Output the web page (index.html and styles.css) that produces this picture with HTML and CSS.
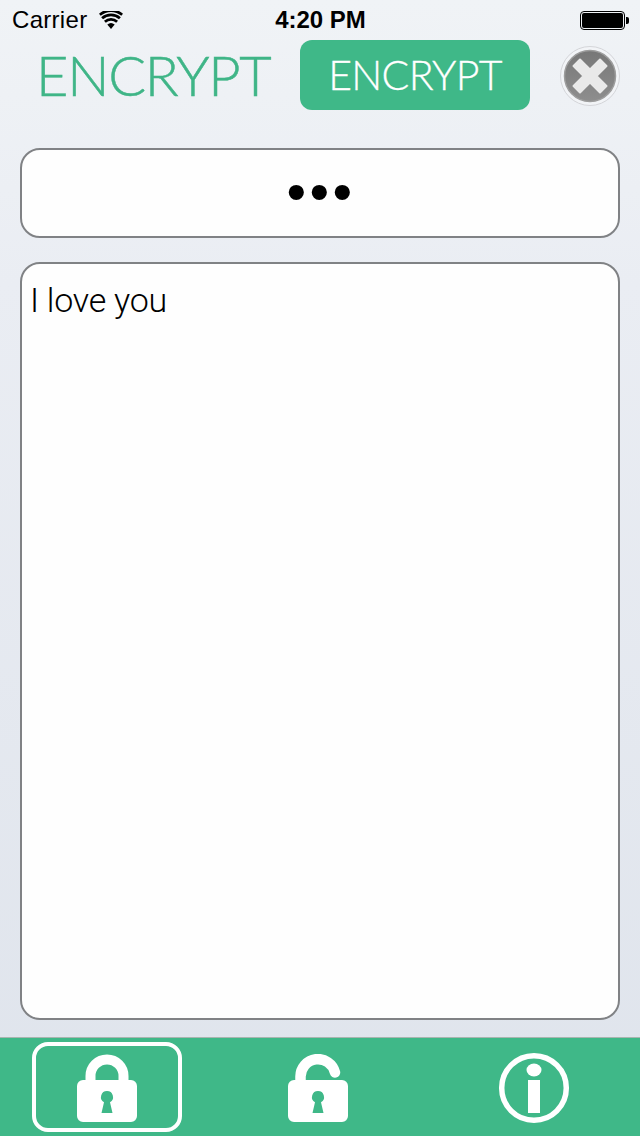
FILE: index.html
```html
<!DOCTYPE html>
<html lang="en">
<head>
<meta charset="utf-8">
<title>Encrypt</title>
<link rel="stylesheet" href="styles.css">
</head>
<body>
<div class="screen">
  <div class="status">
    <div class="status-left">
      <span class="carrier">Carrier</span>
      <svg class="wifi" width="24" height="18" viewBox="0 0 24 18"><path d="M12 18 8.300 13.500a5.800 5.800 0 0 1 7.400 0Z" fill="#000"/><path d="M5.900 10.700a9.300 9.300 0 0 1 12.200 0M3.100 7.200a13.500 13.500 0 0 1 17.800 0M.8 3.800a17.200 17.200 0 0 1 22.400 0" fill="none" stroke="#000" stroke-width="2.800"/></svg>
    </div>
    <div class="time">4:20 PM</div>
    <div class="status-right">
      <div class="battery"><div class="battery-fill"></div></div>
      <div class="battery-nub"></div>
    </div>
  </div>
  <div class="header">
    <div class="title">ENCRYPT</div>
    <div class="action">ENCRYPT</div>
    <svg class="close" width="60" height="60" viewBox="0 0 60 60">
      <defs><linearGradient id="closeg" x1="0" y1="0" x2="0" y2="1"><stop offset="0" stop-color="#777"/><stop offset="1" stop-color="#8e8e8e"/></linearGradient></defs>
      <circle cx="30" cy="30" r="29.500" fill="#f2f4f7" stroke="#d4d5d9" stroke-width="1"/>
      <circle cx="30" cy="30" r="25.500" fill="url(#closeg)" stroke="#9d9d9d" stroke-width="1.500"/>
      <path d="M13.500 20 20 13.500 30 23.500 40 13.500 46.500 20 36.500 30 46.500 40 40 46.500 30 36.500 20 46.500 13.500 40 23.500 30Z" fill="#e9e9e9" stroke="#e9e9e9" stroke-width="2" stroke-linejoin="round"/>
    </svg>
  </div>
  <div class="field password">•••</div>
  <div class="field message">I love you</div>
  <div class="tabs">
    <div class="tab tab-active">
      <svg class="icon" width="60" height="68" viewBox="0 0 60 68"><path d="M13.500 30V22a16.500 16.500 0 0 1 33 0v8" fill="none" stroke="#fff" stroke-width="10"/><path fill-rule="evenodd" d="M6 26h48a6 6 0 0 1 6 6v30a6 6 0 0 1-6 6H6a6 6 0 0 1-6-6V32a6 6 0 0 1 6-6Zm24 11a6 6 0 0 0-3 11.200L24.500 59h11L33 48.200A6 6 0 0 0 30 37Z" fill="#fff"/></svg>
    </div>
    <div class="tab">
      <svg class="icon unlock" width="60" height="68" viewBox="0 0 60 68"><path d="M12.500 30V23A17.500 17.500 0 0 1 47 18.500" fill="none" stroke="#fff" stroke-width="10.500" stroke-linecap="round"/><path fill-rule="evenodd" d="M6 26h48a6 6 0 0 1 6 6v30a6 6 0 0 1-6 6H6a6 6 0 0 1-6-6V32a6 6 0 0 1 6-6Zm24 11a6 6 0 0 0-3 11.200L24.500 59h11L33 48.200A6 6 0 0 0 30 37Z" fill="#fff"/></svg>
    </div>
    <div class="tab">
      <svg class="icon info" width="72" height="72" viewBox="0 0 72 72"><circle cx="36" cy="36" r="32.300" fill="none" stroke="#fff" stroke-width="5.500"/><ellipse cx="36" cy="18" rx="7.500" ry="6.500" fill="#fff"/><rect x="30" y="28" width="12" height="33" fill="#fff"/></svg>
    </div>
  </div>
</div>
</body>
</html>
```
FILE: styles.css
```css
* { box-sizing: border-box; }
html, body { margin: 0; padding: 0; }
.screen {
  width: 640px;
  height: 1136px;
  display: flex;
  flex-direction: column;
  background: linear-gradient(180deg, #f0f3f6 0%, #eaedf3 25%, #dfe4ec 100%);
  font-family: "Liberation Sans", Arial, sans-serif;
  overflow: hidden;
}
.status {
  height: 40px;
  padding: 0 11px 0 12px;
  display: grid;
  grid-template-columns: 1fr auto 1fr;
  align-items: center;
  font-size: 24px;
  color: #000;
}
.status-left { display: flex; align-items: center; gap: 12px; }
.carrier { letter-spacing: 0.3px; }
.time { font-weight: 700; }
.status-right { display: flex; align-items: center; justify-content: flex-end; gap: 1px; }
.battery {
  width: 45px;
  height: 19px;
  border: 1px solid #000;
  border-radius: 4px;
  padding: 1px;
}
.battery-fill { width: 100%; height: 100%; background: #000; border-radius: 2px; }
.battery-nub { width: 3px; height: 7px; background: #000; border-radius: 0 2px 2px 0; }
.header {
  height: 70px;
  padding-left: 36px;
  display: flex;
  align-items: center;
}
.title {
  width: 264px;
  font-family: "Lato", sans-serif;
  font-weight: 300;
  font-size: 56px;
  letter-spacing: -1.300px;
  line-height: 70px;
  color: #3fb587;
  -webkit-text-stroke: 0.5px #3fb587;
}
.action {
  width: 230px;
  height: 70px;
  border-radius: 12px;
  background: #3fb888;
  color: #fff;
  font-family: "Lato", sans-serif;
  font-weight: 300;
  font-size: 41px;
  letter-spacing: -0.700px;
  line-height: 70px;
  text-align: center;
  -webkit-text-stroke: 0.3px #fff;
}
.close { margin-left: 30px; margin-top: 1px; flex: none; }
.field {
  margin: 0 20px;
  background: #fefefe;
  border: 2px solid #808285;
  border-radius: 20px;
  color: #000;
}
.password {
  height: 90px;
  margin-top: 38px;
  padding-left: 2px;
  text-align: center;
  font-size: 56px;
  letter-spacing: 3.400px;
  line-height: 84px;
}
.message {
  height: 758px;
  margin-top: 24px;
  padding: 16px 8px;
  font-family: "Roboto", sans-serif;
  font-weight: 300;
  font-size: 34px;
  letter-spacing: -0.250px;
  line-height: 40px;
}
.tabs {
  margin-top: 17px;
  height: 99px;
  background: #3fb888;
  border-top: 1px solid #a9b5b0;
  display: grid;
  grid-template-columns: repeat(3, 1fr);
  align-items: center;
  justify-items: center;
}
.tab {
  width: 150px;
  height: 90px;
  display: flex;
  align-items: center;
  justify-content: center;
  border: 4px solid transparent;
  border-radius: 16px;
}
.tab-active { border-color: #fff; }
.icon { margin-top: 2px; }
.unlock { margin-left: -4px; }
.info { margin-left: 2px; }
```
